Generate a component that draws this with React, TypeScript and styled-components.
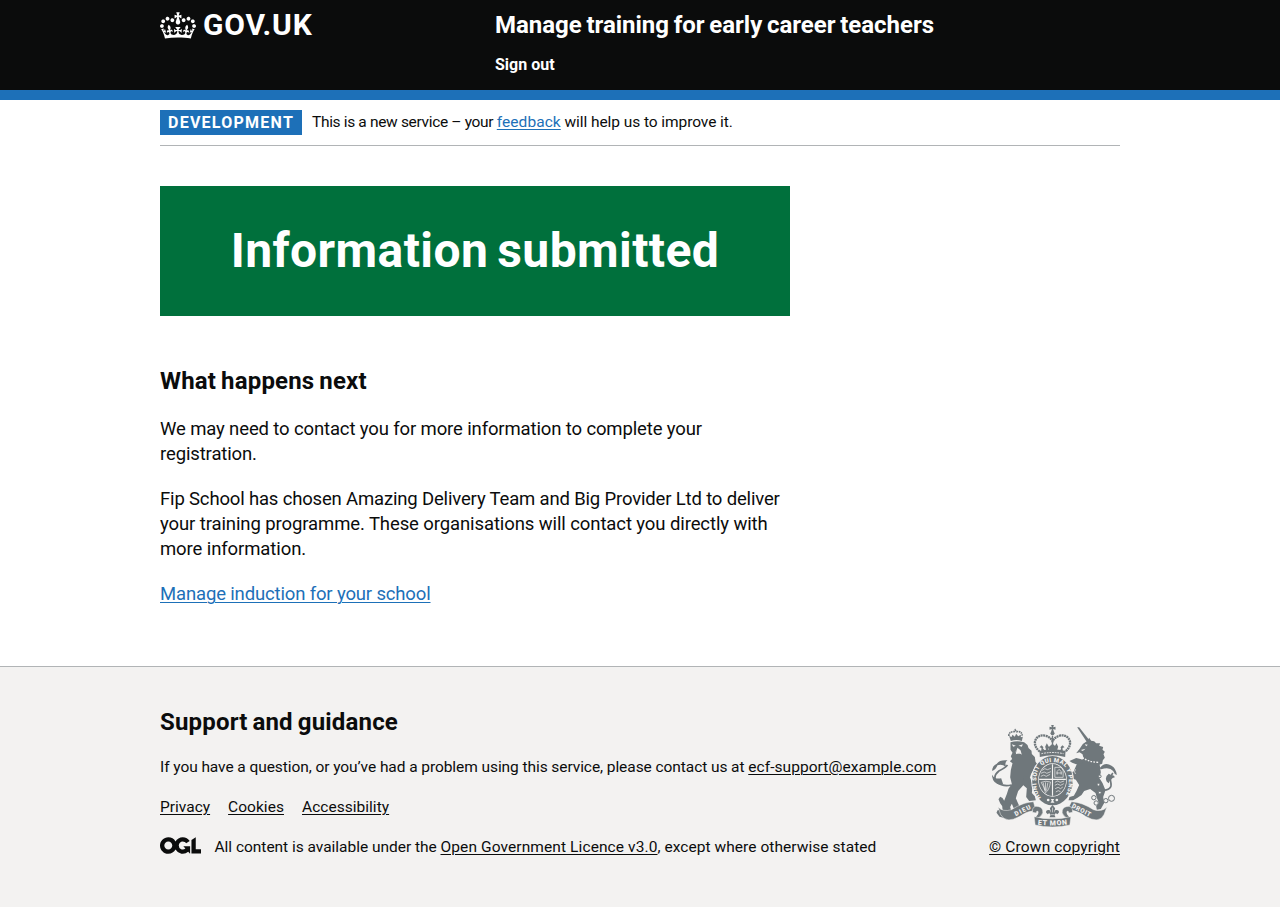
import React from "react";
import styled, { createGlobalStyle } from "styled-components";

const color = {
  ink: "#0b0c0c",
  blue: "#1d70b8",
  green: "#00703c",
  line: "#b1b4b6",
  footer: "#f3f2f1",
  crest: "#6f777b",
  white: "#ffffff",
};

const GlobalStyle = createGlobalStyle`
  *, *::before, *::after { box-sizing: border-box; }
  body {
    margin: 0;
    background: ${color.footer};
    color: ${color.ink};
    font-family: Roboto, "Liberation Sans", Arial, sans-serif;
    -webkit-font-smoothing: antialiased;
  }
  h1, h2, p, ul { margin: 0; padding: 0; }
`;

const Page = styled.div`
  display: flex;
  flex-direction: column;
  min-height: 100vh;
  background: ${color.white};
`;

const Container = styled.div`
  width: 960px;
  margin: 0 auto;
`;

const Header = styled.header`
  height: 100px;
  padding-top: 10px;
  background: ${color.ink};
  border-bottom: 10px solid ${color.blue};
`;

const HeaderGrid = styled(Container)`
  display: grid;
  grid-template-columns: 335px 1fr;
`;

const HomeLink = styled.a`
  display: flex;
  height: 30px;
  gap: 7px;
  align-items: flex-start;
  color: ${color.white};
  text-decoration: none;
`;

const CrownIcon = styled.svg`
  flex: none;
  width: 36px;
  height: 27px;
  margin-top: 2px;
  fill: currentColor;
`;

const Logotype = styled.span`
  font-size: 30px;
  font-weight: 700;
  line-height: 30px;
  letter-spacing: 0.8px;
`;

const ServiceName = styled.a`
  display: block;
  color: ${color.white};
  font-size: 24px;
  font-weight: 700;
  line-height: 30px;
  letter-spacing: -0.02px;
  word-spacing: -1.2px;
  text-decoration: none;
`;

const SignOut = styled.a`
  display: block;
  margin-top: 15px;
  color: ${color.white};
  font-size: 16px;
  font-weight: 700;
  line-height: 20px;
  text-decoration: none;
`;

const Run = styled.span<{ $track?: number }>`
  letter-spacing: ${(p) => p.$track ?? 0}px;
`;

const Link = styled.a<{ $tone?: "blue" | "ink"; $track?: number }>`
  color: ${(p) => (p.$tone === "blue" ? color.blue : color.ink)};
  letter-spacing: ${(p) => p.$track ?? 0}px;
  text-decoration: underline;
  text-decoration-thickness: 1px;
  text-underline-offset: 1.5px;
`;

const PhaseBanner = styled(Container)`
  display: flex;
  align-items: center;
  height: 46px;
  border-bottom: 1px solid ${color.line};
`;

const PhaseTag = styled.strong`
  height: 25px;
  width: 142px;
  margin-right: 10px;
  padding: 0 8px;
  background: ${color.blue};
  color: ${color.white};
  font-size: 16px;
  font-weight: 700;
  line-height: 25px;
  letter-spacing: 1.25px;
  white-space: nowrap;
`;

const PhaseText = styled.p`
  padding-bottom: 2px;
  font-size: 15.5px;
  line-height: 20px;
  white-space: pre;
`;

const Main = styled(Container).attrs({ as: "main" })`
  flex: none;
  height: 520px;
  padding-top: 40px;
`;

const Column = styled.div`
  width: 630px;
`;

const Panel = styled.div`
  display: flex;
  align-items: center;
  justify-content: center;
  height: 130px;
  margin-bottom: 50px;
  background: ${color.green};
  color: ${color.white};
`;

const PanelTitle = styled.h1`
  font-size: 48px;
  font-weight: 700;
  line-height: 50px;
  letter-spacing: 0.42px;
  word-spacing: -3.4px;
`;

const Heading = styled.h2`
  font-size: 24px;
  font-weight: 700;
  line-height: 30px;
  letter-spacing: 0.18px;
  word-spacing: -1.2px;
`;

const Copy = styled.div`
  display: flex;
  flex-direction: column;
  gap: 20px;
  padding-top: 21px;
`;

const Body = styled.p`
  font-size: 18.5px;
  line-height: 25px;
`;

const Footer = styled.footer`
  flex: 1;
  padding-top: 40px;
  background: ${color.footer};
  border-top: 1px solid ${color.line};
`;

const FooterGrid = styled(Container)`
  display: flex;
  justify-content: space-between;
  align-items: flex-end;
`;

const FooterText = styled.p`
  font-size: 15.5px;
  line-height: 20px;
  white-space: pre;
`;

const FooterIntro = styled(FooterText)`
  margin-top: 20px;
`;

const FooterLinks = styled.ul`
  display: flex;
  gap: 18px;
  margin: 20px 0;
  font-size: 15.5px;
  line-height: 20px;
  list-style: none;
`;

const Licence = styled.div`
  display: flex;
  align-items: center;
  gap: 13.5px;
`;

const OglIcon = styled.svg`
  width: 41px;
  height: 17px;
  margin-bottom: 3px;
  fill: currentColor;
`;

const Copyright = styled.div`
  display: flex;
  flex-direction: column;
  align-items: center;
  gap: 10px;
  width: 131px;
  font-size: 15.5px;
  line-height: 20px;
  white-space: nowrap;
`;

const CrestSvg = styled.svg`
  width: 125px;
  height: 102px;
`;

const Crown = () => (
  <CrownIcon viewBox="0 0 132 97" aria-hidden="true">
    <path d="M25 30.2c3.5 1.5 7.7-.2 9.1-3.7 1.5-3.6-.2-7.8-3.9-9.2-3.6-1.4-7.6.3-9.1 3.9-1.4 3.5.3 7.5 3.9 9zM9 39.5c3.6 1.5 7.8-.2 9.2-3.7 1.5-3.6-.2-7.8-3.9-9.1-3.6-1.5-7.6.2-9.1 3.8-1.4 3.5.3 7.5 3.8 9zM4.4 57.2c3.5 1.5 7.7-.2 9.1-3.8 1.5-3.6-.2-7.7-3.9-9.1-3.5-1.5-7.6.3-9.1 3.8-1.4 3.5.3 7.6 3.9 9.1zm38.3-21.4c3.5 1.5 7.7-.2 9.1-3.8 1.5-3.6-.2-7.7-3.9-9.1-3.6-1.5-7.6.3-9.1 3.8-1.3 3.6.4 7.7 3.9 9.1zm64.4-5.6c-3.6 1.5-7.8-.2-9.1-3.7-1.5-3.6.2-7.8 3.8-9.2 3.6-1.4 7.7.3 9.2 3.9 1.3 3.5-.4 7.5-3.9 9zm15.9 9.3c-3.6 1.5-7.7-.2-9.1-3.7-1.5-3.6.2-7.8 3.7-9.1 3.6-1.5 7.7.2 9.2 3.8 1.5 3.5-.3 7.5-3.8 9zm4.7 17.7c-3.6 1.5-7.8-.2-9.2-3.8-1.5-3.6.2-7.7 3.9-9.1 3.6-1.5 7.7.3 9.2 3.8 1.3 3.5-.4 7.6-3.9 9.1zM89.3 35.8c-3.6 1.5-7.8-.2-9.2-3.8-1.4-3.6.2-7.7 3.9-9.1 3.6-1.5 7.7.3 9.2 3.8 1.4 3.6-.3 7.7-3.9 9.1zM69.7 17.7l8.9 4.7V9.3l-8.9 2.8c-.2-.3-.5-.6-.9-.9L72.4 0H59.6l3.5 11.2c-.3.3-.6.5-.9.9l-8.8-2.8v13.1l8.8-4.7c.3.3.6.7.9.9l-5 15.4v.1c-.2.8-.4 1.6-.4 2.4 0 4.1 3.1 7.5 7 8.1h.2c.3 0 .7.1 1 .1.4 0 .7 0 1-.1h.2c4-.6 7.1-4.1 7.1-8.1 0-.8-.1-1.7-.4-2.4V34l-5.1-15.4c.4-.2.7-.6 1-.9zM66 92.8c16.9 0 32.8 1.1 47.1 3.2 4-16.9 8.9-26.7 14-33.5l-9.6-3.4c1 4.9 1.1 7.2 0 10.2-1.5-1.4-3-4.3-4.2-8.7L108.6 76c2.8-2 5-3.2 7.5-3.3-4.4 9.4-10 11.9-13.6 11.2-4.3-.8-6.3-4.6-5.6-7.9 1-4.7 5.7-5.9 8-.5 4.3-8.7-3-11.4-7.6-8.8 7.1-7.2 7.9-13.5 2.1-21.1-8 6.1-8.1 12.3-4.5 20.8-4.7-5.4-12.1-2.5-9.5 6.2 3.4-5.2 7.9-2 7.2 3.1-.6 4.3-6.4 7.8-13.5 7.2-10.3-.9-10.9-8-11.2-13.8 2.5-.5 7.1 1.8 11 7.3L80.2 60c-4.1 4.4-8 5.3-12.3 5.4 1.4-4.4 8-11.6 8-11.6H55.5s6.4 7.2 7.9 11.6c-4.2-.1-8-1-12.3-5.4l1.4 16.4c3.9-5.5 8.5-7.7 10.9-7.3-.3 5.8-.9 12.8-11.1 13.8-7.2.6-12.9-2.9-13.5-7.2-.7-5 3.8-8.3 7.1-3.1 2.7-8.7-4.6-11.6-9.4-6.2 3.7-8.5 3.6-14.7-4.6-20.8-5.8 7.6-5 13.9 2.2 21.1-4.7-2.6-11.9.1-7.7 8.8 2.3-5.5 7.1-4.2 8.1.5.7 3.3-1.3 7.1-5.7 7.9-3.5.7-9-1.8-13.5-11.2 2.5.1 4.7 1.3 7.5 3.3l-4.7-15.4c-1.2 4.4-2.7 7.2-4.3 8.7-1.1-3-.9-5.3 0-10.2l-9.5 3.4c5 6.9 9.9 16.7 14 33.5 14.8-2.1 30.8-3.2 47.7-3.2z" />
  </CrownIcon>
);

const Ogl = () => (
  <OglIcon viewBox="0 0 483.2 195.7" aria-hidden="true">
    <path d="M421.5 142.8V.1l-50.7 32.3v161.1h112.4v-50.7zm-122.3-9.6A47.12 47.12 0 0 1 221 97.8c0-26 21.1-47.1 47.1-47.1 16.7 0 31.4 8.7 39.7 21.8l42.7-27.2A97.63 97.63 0 0 0 268.1 0c-36.5 0-68.3 20.1-85.1 49.7A98 98 0 0 0 97.8 0C43.9 0 0 43.9 0 97.8s43.9 97.8 97.8 97.8c36.5 0 68.3-20.1 85.1-49.7a97.76 97.76 0 0 0 149.6 25.4l19.4 22.2h3v-87.8h-80l24.3 27.5zM97.8 145c-26 0-47.1-21.1-47.1-47.1s21.1-47.1 47.1-47.1 47.1 21.1 47.1 47.1S123.8 145 97.8 145" />
  </OglIcon>
);

const Crest = () => (
  <CrestSvg viewBox="37.5 30 375 306" aria-hidden="true" fill={color.crest}>
    {/* Lion: tail, crown, mane, body */}
    <g>
      <path d="M96 210q-26 6-44-8-14-18 6-34 20-10 26-18" fill="none" stroke={color.crest} strokeWidth="5" />
      <path d="M38 168q0-16 14-22 8-12 32-10-10 6-4 20-14-11-26-5-4 12-16 17zm-1 10q8 16 28 12l6 18q-32 4-34-30z" />
      <path d="M94 78l-5-15 7 3 3-7 7 6 4-9 6 8 8-5v8l6-2-3 13q-16-6-33 0z" />
      <path d="M88 63q0-14 16-13l3-5 4 5q16-3 17 12" fill="none" stroke={color.crest} strokeWidth="5" strokeDasharray="5 2" />
      <path d="M93 82q20-6 41 0l10 8 3 9 9 8 1 10 9 9 2 14 7 10-8 6-12 20-5 16-8 6-12 14-14 16-7 22 10 22 12 6 3 10-24 0-8-10-5-12-5 10 5 18-4 8-16 8-17-5-9-12 3-7 9-1 7 6-2-18-6-8-5-12 5-8 7 4 5 8 8-20 5-16 10-14-5-20 2-22 5-20-8-6 7-7-4-8 5-11-6-9z" />
      <path d="M134 182l18 6 8 22-3 24 9 10 3 12-20 2-9-12 2-26-14-12z" />
      <path d="M97 88l12 4-8 3zm20 4l13-4-3 7zM114 98l9 8 4 13-8-6-10 5 2-12z" fill={color.footer} />
      <path d="M108 111q8 7 16 4" stroke={color.footer} strokeWidth="2.2" fill="none" />
    </g>

    {/* Unicorn: tail, horn, head, body, chain */}
    <g>
      <path d="M366 226q34 0 28-24-4-16 6-28" fill="none" stroke={color.crest} strokeWidth="5" />
      <path d="M360 160q16-21 36-8 14 8 16 28-8-3-11-12-11-13-36-5zm22 40q-8-14 6-24l8 5q8-2 10 6-14 4-18 18z" />
      <path d="M293 37l6 0 33 42-8 5z" />
      <path d="M300 102l10-15 14-10 5-9 6 9 9 2 6 6 12 0-3 7 12 4-2 8 7 6-4 8 4 10-6 8-2 10-12 4-42-14-5-18-9-6-10 3z" />
      <path d="M316 88l9 1-5 5zM304 105l14-4-8 7z" fill={color.footer} />
      <path d="M296 138l22-8 42 16 4 26-4 18 9 14 9 22-7 20 3 18-10 18-12 2-2-10 8-10-6-16-4-14-16-12-18 6-8 12-12 8-13 8-14 0 3-10 13-4 8-14 8-18-10-16-12-4-10 6-14-4 4-8 8-2-11-12-9-6-12 2-2-10 12-4 16 8 10 12 13-2z" />
      <path d="M270 138l20-9 16 4 4 12-20 3-12-5z" />
      <path d="M302 122q20 20 58 20" fill="none" stroke={color.footer} strokeWidth="4" strokeDasharray="5 4" />
      <path d="M288 163q-6 8 0 14" fill="none" stroke={color.footer} strokeWidth="2" />
      <g fill={color.footer} stroke={color.crest} strokeWidth="3">
        <circle cx="343" cy="248" r="6.5" />
        <circle cx="350" cy="264" r="6.5" />
        <circle cx="379" cy="257" r="6.5" />
        <circle cx="396" cy="250" r="9" />
        <circle cx="361" cy="233" r="4" />
        <circle cx="357" cy="209" r="4" />
        <circle cx="361" cy="184" r="4" />
      </g>
    </g>

    {/* Garter and shield */}
    <ellipse cx="219" cy="197" rx="64" ry="76" fill={color.footer} />
    <ellipse cx="219" cy="197" rx="61" ry="74" />
    <ellipse cx="219" cy="195" rx="43" ry="50" fill={color.footer} />
    <ellipse cx="219" cy="195" rx="41" ry="48" />
    <path id="garter-motto" d="M185 248C166 230 164 168 186 151C203 138 235 138 252 151C274 168 272 230 253 248" fill="none" />
    <text fill={color.footer} fontFamily="Roboto, sans-serif" fontSize="18" fontWeight="900">
      <textPath href="#garter-motto" textLength="268" lengthAdjust="spacing">HONI SOIT QUI MAL Y PENSE</textPath>
    </text>
    <g fill="none" stroke={color.footer} strokeWidth="2">
      <path d="M219 148v94M179 193h80" strokeWidth="3.5" />
      <path d="M188 166l8-5 8 3 10-4M184 175l10-4 8 4 12-5M184 184l9-4 7 4 12-6" />
      <path d="M226 157h20l5 10v20h-25zM233 179v-10l6-6 6 7v9M230 174h17" />
      <path d="M226 202l9-4 7 4 12-4M226 211l8-4 9 4 10-5M227 221l9-4 7 4 7-5M229 231l7-4 7 3" />
      <path d="M185 202q14-6 28-1-4 26-15 32-4-18-13-31zM191 203l5 22M198 202v26M205 203l-4 24" />
    </g>
    <circle cx="206" cy="255" r="4" fill={color.footer} />
    <circle cx="232" cy="255" r="4" fill={color.footer} />
    <path d="M214 252h10l-3 5 4 6h-12l4-6z" fill={color.footer} />

    {/* Royal crown */}
    <g>
      <path d="M174 114C150 84 168 54 199 60q15 4 20 16 5-12 20-16c31-6 49 24 25 54" fill={color.footer} />
      <path d="M215 30h8l-2 7 7-2v9l-7-2 2 9h-8l2-9-7 2v-9l7 2z" />
      <circle cx="219" cy="55" r="6" />
      <path d="M181 110C152 86 170 56 197 62q16 4 22 17 6-13 22-17c27-6 45 24 16 48" fill="none" stroke={color.crest} strokeWidth="7" strokeDasharray="6 1.6" />
      <path d="M219 62v44" stroke={color.crest} strokeWidth="4" />
      <path d="M180 108q39-10 78 0l-1 18q-38-10-76 0z" />
      <path d="M185 110l1-11-6-2 6-6 6 6-2 3 8 9zm16-1l-4-14 5-10 6 10-3 14zm8 0l-2-12 12-11 12 11-2 12zm20 0l-4-14 6-10 5 10-4 14zm10 1l6-9-2-4 6-6 6 6-6 2 1 12z" />
      <path d="M186 116q33-7 66 0" fill="none" stroke={color.footer} strokeWidth="3" strokeDasharray="5 3" />
    </g>

    {/* Ribbon with motto */}
    <g stroke={color.footer} strokeWidth="1.5">
      <path d="M56 276q14 16 40 8 34-22 66-24l4 16-7 12q-20 2-38 16-42 24-58-6z" />
      <path d="M382 276q-14 16-40 8-34-22-66-24l-6 12 8 14q22 4 40 18 42 24 56-6z" />
      <path d="M159 292q-2-22 19-17 13 3 12 18-4 12-18 18l-8-2q14-10 12-19-4-6-6 4z" />
      <path d="M279 292q2-22-19-17-13 3-12 18 4 12 18 18l8-2q-14-10-12-19 4-6 6 4z" />
      <path d="M164 305q54 13 110 0l-3 25q-52 12-104 0z" />
    </g>
    <g fill={color.footer} fontFamily="Roboto, sans-serif" fontWeight="900">
      <text fontSize="19" textLength="52" transform="translate(109 304) rotate(-27)">DIEU</text>
      <text fontSize="19" textLength="62" transform="translate(275 277) rotate(27)">DROIT</text>
      <path id="motto-base" d="M175 329q44 5 90-1" fill="none" />
      <text fontSize="21">
        <textPath href="#motto-base" textLength="88">ET MON</textPath>
      </text>
    </g>

    {/* Fleur-de-lis badge */}
    <path d="M219 270l8 10-4 13 5-8q12-2 10 8l-5 5-4-4-4 6 3 7h-18l3-7-4-6-4 4-5-5q-2-10 10-8l5 8-4-13z" />
    <path d="M219 278v14M213 299h12" stroke={color.footer} strokeWidth="1.8" />
  </CrestSvg>
);

export default function App() {
  return (
    <Page>
      <GlobalStyle />
      <Header>
        <HeaderGrid>
          <HomeLink href="#">
            <Crown />
            <Logotype>GOV.UK</Logotype>
          </HomeLink>
          <div>
            <ServiceName href="#">Manage training for early career teachers</ServiceName>
            <SignOut href="#">Sign out</SignOut>
          </div>
        </HeaderGrid>
      </Header>

      <PhaseBanner>
        <PhaseTag>DEVELOPMENT</PhaseTag>
        <PhaseText>
          <Run $track={-0.33}>This is a new service – your </Run>
          <Link href="#" $tone="blue" $track={0.06}>feedback</Link>
          <Run $track={-0.07}> will help us to improve it.</Run>
        </PhaseText>
      </PhaseBanner>

      <Main>
        <Column>
          <Panel>
            <PanelTitle>Information submitted</PanelTitle>
          </Panel>
          <Heading>What happens next</Heading>
          <Copy>
            <Body>
              <Run $track={-0.13}>We may need to contact you for more information to complete your registration.</Run>
            </Body>
            <Body>
              <Run $track={-0.165}>Fip School has chosen Amazing Delivery Team and Big Provider Ltd to deliver </Run>
              <Run $track={-0.1}>your training programme. These organisations will contact you directly with more information.</Run>
            </Body>
            <Body>
              <Link href="#" $tone="blue" $track={-0.15}>Manage induction for your school</Link>
            </Body>
          </Copy>
        </Column>
      </Main>

      <Footer>
        <FooterGrid>
          <div>
            <Heading>Support and guidance</Heading>
            <FooterIntro>
              <Run $track={-0.072}>If you have a question, or you’ve had a problem using this service, please contact us at </Run>
              <Link href="#" $track={0.06}>ecf-support@example.com</Link>
            </FooterIntro>
            <FooterLinks>
              <li><Link href="#">Privacy</Link></li>
              <li><Link href="#" $track={0.04}>Cookies</Link></li>
              <li><Link href="#" $track={0.03}>Accessibility</Link></li>
            </FooterLinks>
            <Licence>
              <Ogl />
              <FooterText>
                <Run $track={-0.025}>All content is available under the </Run>
                <Link href="#" $track={0.1}>Open Government Licence v3.0</Link>
                <Run $track={0.05}>, except where otherwise stated</Run>
              </FooterText>
            </Licence>
          </div>
          <Copyright>
            <Crest />
            <Link href="#" $track={0.15}>© Crown copyright</Link>
          </Copyright>
        </FooterGrid>
      </Footer>
    </Page>
  );
}
